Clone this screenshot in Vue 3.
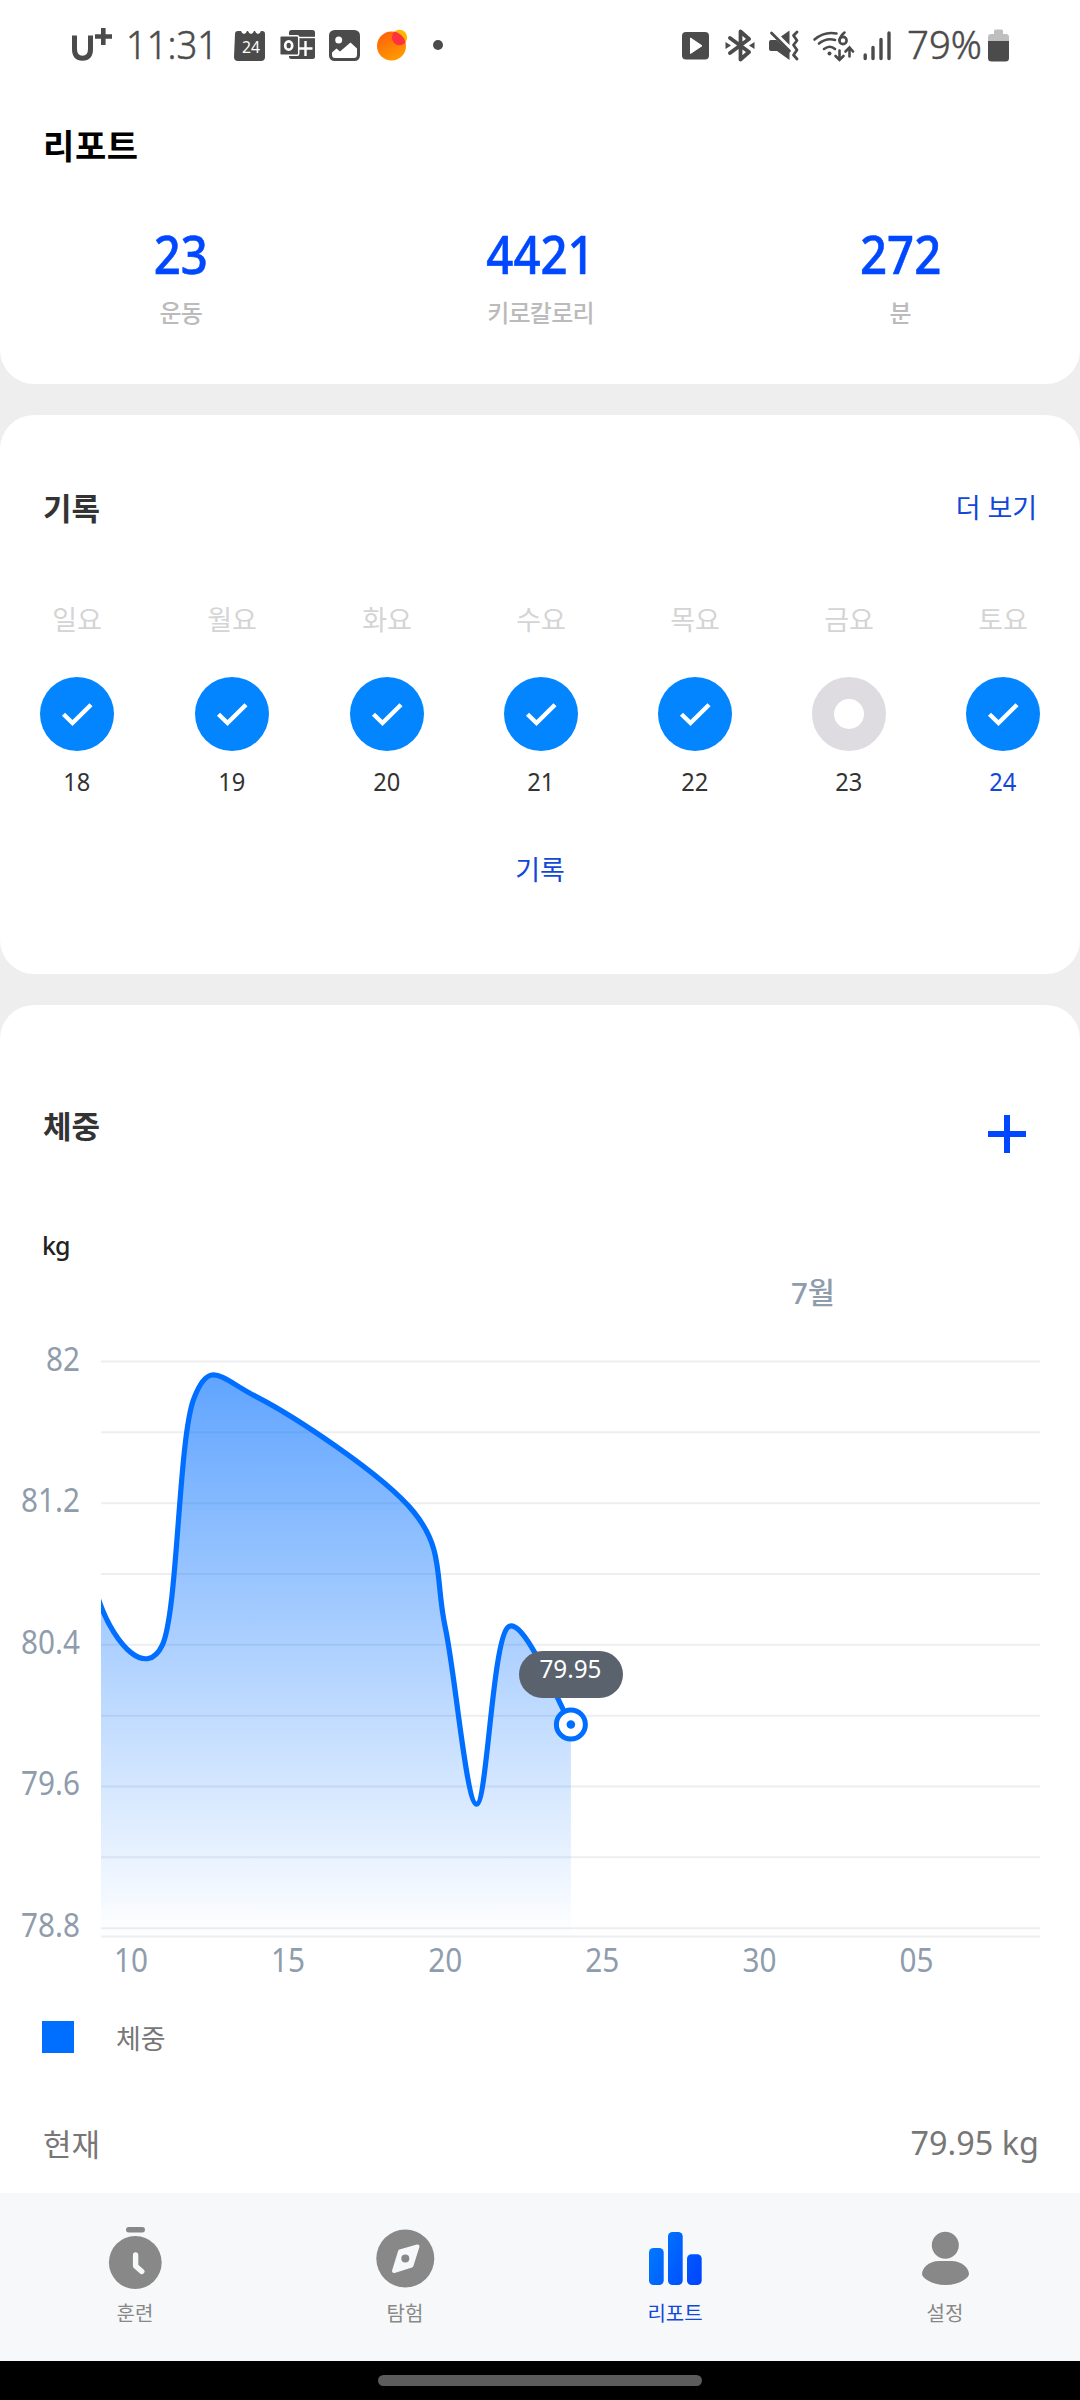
<script setup>
const stats = [
  { value: '23', label: '운동' },
  { value: '4421', label: '키로칼로리' },
  { value: '272', label: '분' },
]

const days = [
  { name: '일요', date: 18, done: true },
  { name: '월요', date: 19, done: true },
  { name: '화요', date: 20, done: true },
  { name: '수요', date: 21, done: true },
  { name: '목요', date: 22, done: true },
  { name: '금요', date: 23, done: false },
  { name: '토요', date: 24, done: true, today: true },
]

// chart geometry, in the chart's own pixels
const TOP = 101.5
const STEP = 70.83
const gridLines = Array.from({ length: 9 }, (_, i) => TOP + i * STEP)
const yLabels = ['82', '81.2', '80.4', '79.6', '78.8'].map((text, i) => ({ text, y: TOP + i * STEP * 2 }))
const xLabels = [
  { text: '10', day: 10 },
  { text: '15', day: 15 },
  { text: '20', day: 20 },
  { text: '25', day: 25 },
  { text: '30', day: 30 },
  { text: '05', day: 35 },
]
const px = (day) => 131 + (day - 10) * 31.42
const py = (kg) => TOP + (82 - kg) * 177.08

const weights = [
  [8, 81.9],
  [9, 80.64],
  [11, 80.4],
  [12, 81.79],
  [14, 81.8],
  [19, 81.15],
  [20, 80.5],
  [21, 79.5],
  [22, 80.5],
  [24, 79.95],
]
const pts = weights.map(([d, w]) => [px(d), py(w)])

function smooth(points) {
  const k = 0.165
  let d = `M${points[0][0]} ${points[0][1]}`
  for (let i = 0; i < points.length - 1; i++) {
    const a = points[Math.max(i - 1, 0)]
    const b = points[i]
    const c = points[i + 1]
    const e = points[Math.min(i + 2, points.length - 1)]
    d += ` C${b[0] + (c[0] - a[0]) * k} ${b[1] + (c[1] - a[1]) * k} ${c[0] - (e[0] - b[0]) * k} ${c[1] - (e[1] - b[1]) * k} ${c[0]} ${c[1]}`
  }
  return d
}
const line = smooth(pts)
const last = pts[pts.length - 1]
const area = `${line} L${last[0]} 676.5 L${pts[0][0]} 676.5 Z`
</script>

<template>
  <div class="screen">
    <section class="card head">
      <div class="status">
        <svg class="ic" width="40" height="34" viewBox="72 28 40 34">
          <path d="M74.500 35.500V49q0 9.200 8 9.200t8-9.200V35.500" fill="none" stroke="#4b4b4b" stroke-width="5" />
          <path d="M103.300 28v17M95 36.500h17" stroke="#4b4b4b" stroke-width="4.600" />
        </svg>
        <svg class="ic tall" style="margin-left: 10px" width="101" height="58" viewBox="122 16 101 58">
          <text x="126" y="59" font-size="38" font-weight="300" fill="#4b4b4b" stroke="#4b4b4b" stroke-width=".5" textLength="92" lengthAdjust="spacingAndGlyphs">11:31</text>
        </svg>
        <svg class="ic" style="margin-left: 11px" width="32" height="34" viewBox="234 28 32 34">
          <path d="M235 34q0-3 3-3h3q1 3 3 3t3-3h1q1 3 3 3t3-3h1q1 3 3 3t3-3h1q3 0 3 3v23q0 4-4 4h-23q-4 0-4-4z" fill="#4b4b4b" />
          <text x="242" y="53" font-size="17" fill="#fff" textLength="18" lengthAdjust="spacingAndGlyphs">24</text>
        </svg>
        <svg class="ic" style="margin-left: 13px" width="37" height="34" viewBox="279 28 37 34">
          <rect x="289" y="30" width="26" height="29" rx="2.500" fill="#4b4b4b" />
          <path d="M289 37.500h26" stroke="#fff" stroke-width="1.400" />
          <path d="M305.500 41v15M299 48.500h13.500" stroke="#fff" stroke-width="2.400" />
          <rect x="279.700" y="35.700" width="19" height="19.500" rx="1.500" fill="#4b4b4b" stroke="#fff" stroke-width="1.500" />
          <ellipse cx="288.700" cy="45.500" rx="3.500" ry="4.200" fill="none" stroke="#fff" stroke-width="2.700" />
        </svg>
        <svg class="ic" style="margin-left: 12px" width="33" height="34" viewBox="328 28 33 34">
          <rect x="329" y="30" width="31" height="31" rx="5.500" fill="#4b4b4b" />
          <circle cx="338.700" cy="40" r="3.500" fill="#fff" />
          <path d="M332 52.500l4.500-4 3.500 3 10.500-9 6.500 6v6q0 3.500-3 3.500h-19q-3 0-3-3.500z" fill="#fff" />
        </svg>
        <svg class="ic" style="margin-left: 15px" width="33" height="34" viewBox="376 28 33 34">
          <defs>
            <linearGradient id="sun" x1="0" y1="0" x2=".5" y2="1">
              <stop offset="0" stop-color="#ff5a0a" />
              <stop offset="1" stop-color="#ff9800" />
            </linearGradient>
            <clipPath id="sunclip"><circle cx="391.500" cy="46" r="14.500" /></clipPath>
          </defs>
          <circle cx="399.500" cy="37.500" r="7.700" fill="#ffb700" />
          <circle cx="391.500" cy="46" r="14.500" fill="url(#sun)" />
          <circle cx="399.500" cy="37.500" r="7.700" fill="#ff3140" clip-path="url(#sunclip)" />
        </svg>
        <i class="dot"></i>

        <svg class="ic" style="margin-left: auto" width="28" height="34" viewBox="682 28 28 34">
          <rect x="682" y="32" width="27" height="27.500" rx="4" fill="#4b4b4b" />
          <path d="M690.500 38v15.500l11.500-7.700z" fill="#fff" stroke="#fff" stroke-linejoin="round" />
        </svg>
        <svg class="ic" style="margin-left: 15px" width="30" height="34" viewBox="725 28 30 34">
          <path d="M730 38l19 14-8.500 7.500V31.500L749 39l-19 14" fill="none" stroke="#4b4b4b" stroke-width="3.800" stroke-linejoin="round" stroke-linecap="round" />
          <path d="M725.500 42l5.500 3.500-5.500 3.500zM754.500 42l-5.500 3.500 5.500 3.500z" fill="#4b4b4b" />
        </svg>
        <svg class="ic" style="margin-left: 13px" width="32" height="34" viewBox="768 28 32 34">
          <path d="M769 42q0-2 2-2h5.500l13 12v8L777 51h-6q-2 0-2-2zM781 36.500l8.500-6V45z" fill="#4b4b4b" />
          <path d="M771.500 33l18 18" stroke="#4b4b4b" stroke-width="2.800" stroke-linecap="round" />
          <path d="M797 32l-3.500 3.500 3.500 5-3.500 4.500 3.500 5-3.500 5 3.500 4" fill="none" stroke="#4b4b4b" stroke-width="2.800" stroke-linecap="round" stroke-linejoin="round" />
        </svg>
        <svg class="ic" style="margin-left: 12px" width="44" height="34" viewBox="812 28 44 34">
          <g fill="none" stroke="#4b4b4b" stroke-width="2.600" stroke-linecap="round">
            <path d="M814.500 39.500q10-8.500 22-6M819 43.500q7.500-6 16-3.500M824 49q6-4.500 11 0" />
            <path d="M844.500 32.500q-4 3-5 7.500" />
            <circle cx="843" cy="40.500" r="3.600" />
            <path d="M839.500 50.500v9M835.500 56l4 4 4-4M849.500 56.500v-8M845.500 51.500l4-4 3.500 4" />
          </g>
          <circle cx="829.500" cy="53.500" r="2" fill="#4b4b4b" />
        </svg>
        <svg class="ic" style="margin-left: 6px" width="30" height="34" viewBox="862 28 30 34">
          <path d="M865.200 55v3.500M873 47.500v11M881 39.500v19M889 33v25.500" stroke="#4b4b4b" stroke-width="3.400" stroke-linecap="round" />
        </svg>
        <svg class="ic tall" style="margin-left: 15px" width="76" height="58" viewBox="907 16 76 58">
          <text x="907" y="59" font-size="38" font-weight="300" fill="#4b4b4b" stroke="#4b4b4b" stroke-width=".5" textLength="75" lengthAdjust="spacingAndGlyphs">79%</text>
        </svg>
        <svg class="ic" style="margin-left: 5px" width="21" height="34" viewBox="988 28 21 34">
          <path d="M988 41v-4q0-3 3-3h3v-3q0-1.500 1.500-1.500h6q1.500 0 1.500 1.500v3h3q3 0 3 3v4z" fill="#bfbfbf" />
          <path d="M988 41h21v17q0 3.500-3.500 3.500h-14q-3.500 0-3.500-3.500z" fill="#4b4b4b" />
        </svg>
      </div>
      <h1>리포트</h1>
      <div class="stats">
        <div v-for="s in stats" :key="s.label" class="stat">
          <b class="num">{{ s.value }}</b>
          <span>{{ s.label }}</span>
        </div>
      </div>
    </section>

    <section class="card record">
      <div class="row">
        <h2>기록</h2>
        <a>더 보기</a>
      </div>
      <div class="week">
        <div v-for="d in days" :key="d.date" class="day" :class="{ today: d.today }">
          <span class="name">{{ d.name }}</span>
          <svg width="74" height="74" viewBox="0 0 74 74">
            <template v-if="d.done">
              <circle cx="37" cy="37" r="37" fill="#0385ff" />
              <path d="M23.500 37.200l9 8.800L51 27.700" fill="none" stroke="#fff" stroke-width="4.400" />
            </template>
            <circle v-else cx="37" cy="37" r="26" fill="none" stroke="#dedce0" stroke-width="22" />
          </svg>
          <span class="num date">{{ d.date }}</span>
        </div>
      </div>
      <a class="more">기록</a>
    </section>

    <section class="card weight">
      <div class="row">
        <h2>체중</h2>
        <svg class="plus" width="38" height="38" viewBox="0 0 38 38"><path d="M19 0v38M0 19h38" stroke="#0048ff" stroke-width="6" /></svg>
      </div>
      <div class="unit">kg</div>
      <svg class="chart" width="1080" height="730" viewBox="0 0 1080 730">
        <defs>
          <linearGradient id="fill" gradientUnits="userSpaceOnUse" x1="0" y1="101" x2="0" y2="676">
            <stop offset="0" stop-color="#006eff" stop-opacity=".64" />
            <stop offset="1" stop-color="#006eff" stop-opacity="0" />
          </linearGradient>
          <clipPath id="plot"><rect x="101" y="60" width="939" height="617" /></clipPath>
        </defs>
        <text x="813" y="44" font-size="29" font-weight="500" text-anchor="middle" textLength="44" lengthAdjust="spacingAndGlyphs">7월</text>
        <g stroke="#eceeef" stroke-width="2">
          <path v-for="y in gridLines" :key="y" :d="`M101 ${y}H1040`" />
          <path d="M101 676.500H1040" />
        </g>
        <g clip-path="url(#plot)">
          <path :d="area" fill="url(#fill)" />
          <path :d="line" fill="none" stroke="#006eff" stroke-width="5.200" />
        </g>
        <text v-for="l in yLabels" :key="l.text" x="80" :y="l.y + 9" font-size="32" text-anchor="end" :textLength="l.text.length > 2 ? 59 : 34" lengthAdjust="spacingAndGlyphs">{{ l.text }}</text>
        <text v-for="l in xLabels" :key="l.text" :x="px(l.day)" y="711.500" font-size="32" text-anchor="middle" textLength="34" lengthAdjust="spacingAndGlyphs">{{ l.text }}</text>
        <rect x="519" y="391" width="104" height="47" rx="23.500" fill="#5a626e" />
        <text x="570.500" y="418" font-size="25.500" class="tip" text-anchor="middle" textLength="62" lengthAdjust="spacingAndGlyphs">79.95</text>
        <circle :cx="last[0]" :cy="last[1]" r="14.500" fill="#fff" stroke="#006eff" stroke-width="5" />
        <circle :cx="last[0]" :cy="last[1]" r="4.300" fill="#006eff" />
      </svg>
      <div class="legend"><i></i><span>체중</span></div>
      <div class="current"><span>현재</span><span class="num">79.95 kg</span></div>
    </section>

    <nav class="tabs">
      <div class="tab">
        <svg width="64" height="64" viewBox="103 2226 64 64">
          <rect x="126" y="2227" width="19" height="5.500" rx="2.700" fill="#888" />
          <circle cx="135.300" cy="2262.500" r="26.400" fill="#888" />
          <path d="M135.600 2255v11l6.200 5.500" fill="none" stroke="#f7f8fa" stroke-width="5.400" stroke-linecap="round" stroke-linejoin="round" />
        </svg>
        <span>훈련</span>
      </div>
      <div class="tab">
        <svg width="64" height="64" viewBox="373 2226 64 64">
          <circle cx="405.300" cy="2258.500" r="29" fill="#888" />
          <path d="M417.500 2246.500l-17.500 5-6 19.500 17.500-5.500z" fill="#f7f8fa" stroke="#f7f8fa" stroke-width="4" stroke-linejoin="round" />
          <circle cx="405.300" cy="2258.500" r="4" fill="#888" />
        </svg>
        <span>탐험</span>
      </div>
      <div class="tab active">
        <svg width="64" height="64" viewBox="643 2226 64 64">
          <defs>
            <linearGradient id="bars" gradientUnits="userSpaceOnUse" x1="649" y1="2250" x2="702" y2="2275">
              <stop offset="0" stop-color="#0078ff" />
              <stop offset="1" stop-color="#0046ff" />
            </linearGradient>
          </defs>
          <g fill="url(#bars)">
            <rect x="649" y="2248" width="14.700" height="37" rx="4.500" />
            <rect x="668" y="2232" width="14.700" height="53" rx="4.500" />
            <rect x="687" y="2254.300" width="14.700" height="30.700" rx="4.500" />
          </g>
        </svg>
        <span>리포트</span>
      </div>
      <div class="tab">
        <svg width="64" height="64" viewBox="913 2226 64 64">
          <circle cx="945.300" cy="2245.300" r="13.500" fill="#888" />
          <path d="M922 2274c0-6 7-13 17-13h12.500c10 0 17.500 7 17.500 13 0 3.500-9 11-23.500 11s-23.500-7.500-23.500-11z" fill="#888" />
        </svg>
        <span>설정</span>
      </div>
    </nav>
    <div class="gesture"><i></i></div>
  </div>
</template>

<style>
body {
  margin: 0;
}
</style>

<style scoped>
.screen {
  width: 1080px;
  height: 2400px;
  display: flex;
  flex-direction: column;
  background: #eee;
  font-family: 'Noto Sans', 'Noto Sans CJK KR', sans-serif;
  overflow: hidden;
}
.card {
  background: #fff;
  border-radius: 34px;
  box-sizing: border-box;
  flex: none;
}
h1,
h2 {
  margin: 0;
  font-family: 'Noto Sans CJK KR', sans-serif;
  font-weight: 700;
  line-height: 40px;
}
.num {
  display: inline-block;
  font-family: 'Noto Sans', sans-serif;
  transform: scaleX(0.91);
}
.head {
  height: 384px;
  border-radius: 0 0 34px 34px;
}
.status {
  height: 62px;
  padding: 28px 71px 0 72px;
  display: flex;
  align-items: flex-start;
  box-sizing: border-box;
}
.ic {
  flex: none;
  display: block;
}
.tall {
  margin-top: -12px;
}
.dot {
  width: 10px;
  height: 10px;
  border-radius: 50%;
  background: #4b4b4b;
  margin: 12px 0 0 24px;
}
h1 {
  font-size: 34px;
  padding: 63px 0 0 43px;
  letter-spacing: 0.6px;
  color: #000;
}
.stats {
  display: flex;
  padding: 59px 0 0 1px;
}
.stat {
  flex: 1;
  display: flex;
  flex-direction: column;
  align-items: center;
}
.stat b {
  font-size: 52px;
  font-weight: 500;
  line-height: 60px;
  color: #0048ff;
  -webkit-text-stroke: 0.6px #0048ff;
}
.stat span {
  margin-top: 14px;
  font-size: 24px;
  font-weight: 500;
  line-height: 30px;
  letter-spacing: -0.8px;
  color: #bbb;
}
.record {
  height: 559px;
  margin-top: 31px;
  padding: 70px 40px 0;
}
.row {
  display: flex;
  justify-content: space-between;
  align-items: center;
}
h2 {
  padding-left: 3px;
  font-size: 31px;
  color: #333;
}
a {
  font-size: 27px;
  line-height: 40px;
  color: #1247d8;
}
.row a {
  margin-top: 3px;
  padding-right: 3px;
  letter-spacing: -0.1px;
}
.week {
  display: grid;
  grid-template-columns: 155px 155px 154px 154px 154px 154px 74px;
  padding-top: 72px;
}
.day {
  width: 74px;
  display: flex;
  flex-direction: column;
  align-items: center;
}
.name {
  font-size: 27px;
  line-height: 40px;
  color: #d4d4d4;
}
.day svg {
  margin-top: 37px;
}
.date {
  margin-top: 12px;
  font-size: 26px;
  line-height: 36px;
  color: #333;
}
.today .date {
  color: #1247d8;
}
.more {
  display: block;
  margin-top: 51px;
  text-align: center;
}
.weight {
  flex: 1 1 0;
  margin-top: 31px;
  padding-top: 92px;
  border-radius: 34px 34px 0 0;
}
.weight .row {
  padding: 0 54px 0 40px;
}
.plus {
  margin-top: 18px;
}
.unit {
  padding-left: 42px;
  margin-top: 77px;
  font-size: 25px;
  font-weight: 500;
  line-height: 30px;
  letter-spacing: -0.9px;
  color: #222;
}
.chart {
  display: block;
}
.chart text {
  fill: #8f9cac;
}
.chart .tip {
  fill: #fff;
}
.legend {
  display: flex;
  align-items: center;
  height: 40px;
  margin-top: 27px;
  padding-left: 42px;
}
.legend i {
  width: 32px;
  height: 32px;
  background: #006eff;
}
.legend span {
  margin-left: 42px;
  font-size: 27px;
  color: #777;
}
.current {
  display: flex;
  justify-content: space-between;
  align-items: center;
  height: 50px;
  margin-top: 60px;
  padding: 0 41px 0 43px;
  font-size: 31px;
  color: #777;
}
.current .num {
  font-size: 33px;
  line-height: 50px;
  padding-top: 1px;
  transform-origin: right;
  transform: scaleX(0.98);
}
.tabs {
  flex: none;
  height: 168px;
  background: #f7f8fa;
  display: flex;
}
.tab {
  flex: 1;
  display: flex;
  flex-direction: column;
  align-items: center;
  padding-top: 33px;
  font-size: 20px;
  line-height: 28px;
  color: #888;
}
.tab span {
  margin-top: 10px;
}
.active {
  color: #1247d8;
}
.gesture {
  flex: none;
  height: 39px;
  background: #000;
  display: flex;
  justify-content: center;
  padding-top: 14px;
  box-sizing: border-box;
}
.gesture i {
  width: 324px;
  height: 11px;
  border-radius: 5.5px;
  background: #5c5c5c;
}
</style>
